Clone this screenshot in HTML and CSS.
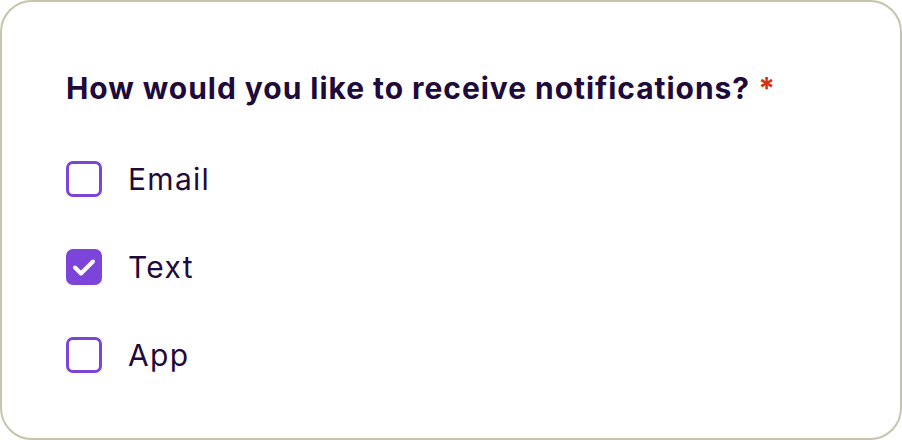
FILE: index.html
```html
<!DOCTYPE html>
<html>
<head>
<meta charset="utf-8">
<link rel="stylesheet" href="styles.css">
</head>
<body>
<div class="card">
  <div class="question">How would you like to receive notifications? <span class="req">*</span></div>
  <div class="options">
    <label class="option">
      <span class="box"></span>
      <span class="label">Email</span>
    </label>
    <label class="option">
      <span class="box checked">
        <svg viewBox="0 0 36 36" width="36" height="36"><path d="M9 18.5 L15 24.5 L27 12.5" fill="none" stroke="#fff" stroke-width="4" stroke-linecap="round" stroke-linejoin="round"/></svg>
      </span>
      <span class="label">Text</span>
    </label>
    <label class="option">
      <span class="box"></span>
      <span class="label">App</span>
    </label>
  </div>
</div>
</body>
</html>
```
FILE: styles.css
```css
html, body { margin: 0; padding: 0; background: #fff; }
body { font-family: Inter, "Noto Sans", sans-serif; color: #1e0b3b; }
.card {
  width: 902px;
  height: 440px;
  box-sizing: border-box;
  border: 2px solid #c6c4aa;
  border-radius: 32px;
  padding: 68px 64px 0 64px;
  display: flex;
  flex-direction: column;
  gap: 55px;
}
.question {
  font-size: 30px;
  font-weight: 700;
  line-height: 36px;
  letter-spacing: 0.95px;
  white-space: nowrap;
}
.req { color: #d93010; letter-spacing: 0; }
.options { display: flex; flex-direction: column; gap: 52px; }
.option { display: flex; align-items: center; gap: 26px; height: 36px; }
.box {
  width: 36px; height: 36px; box-sizing: border-box;
  border: 3px solid #7c44d8; border-radius: 7px;
  display: flex; align-items: center; justify-content: center;
  flex-shrink: 0;
}
.box.checked { background: #7c44d8; border-color: #7c44d8; }
.box.checked svg { margin: -3px; }
.label { font-size: 30px; font-weight: 400; line-height: 36px; letter-spacing: 1.3px; }
```
